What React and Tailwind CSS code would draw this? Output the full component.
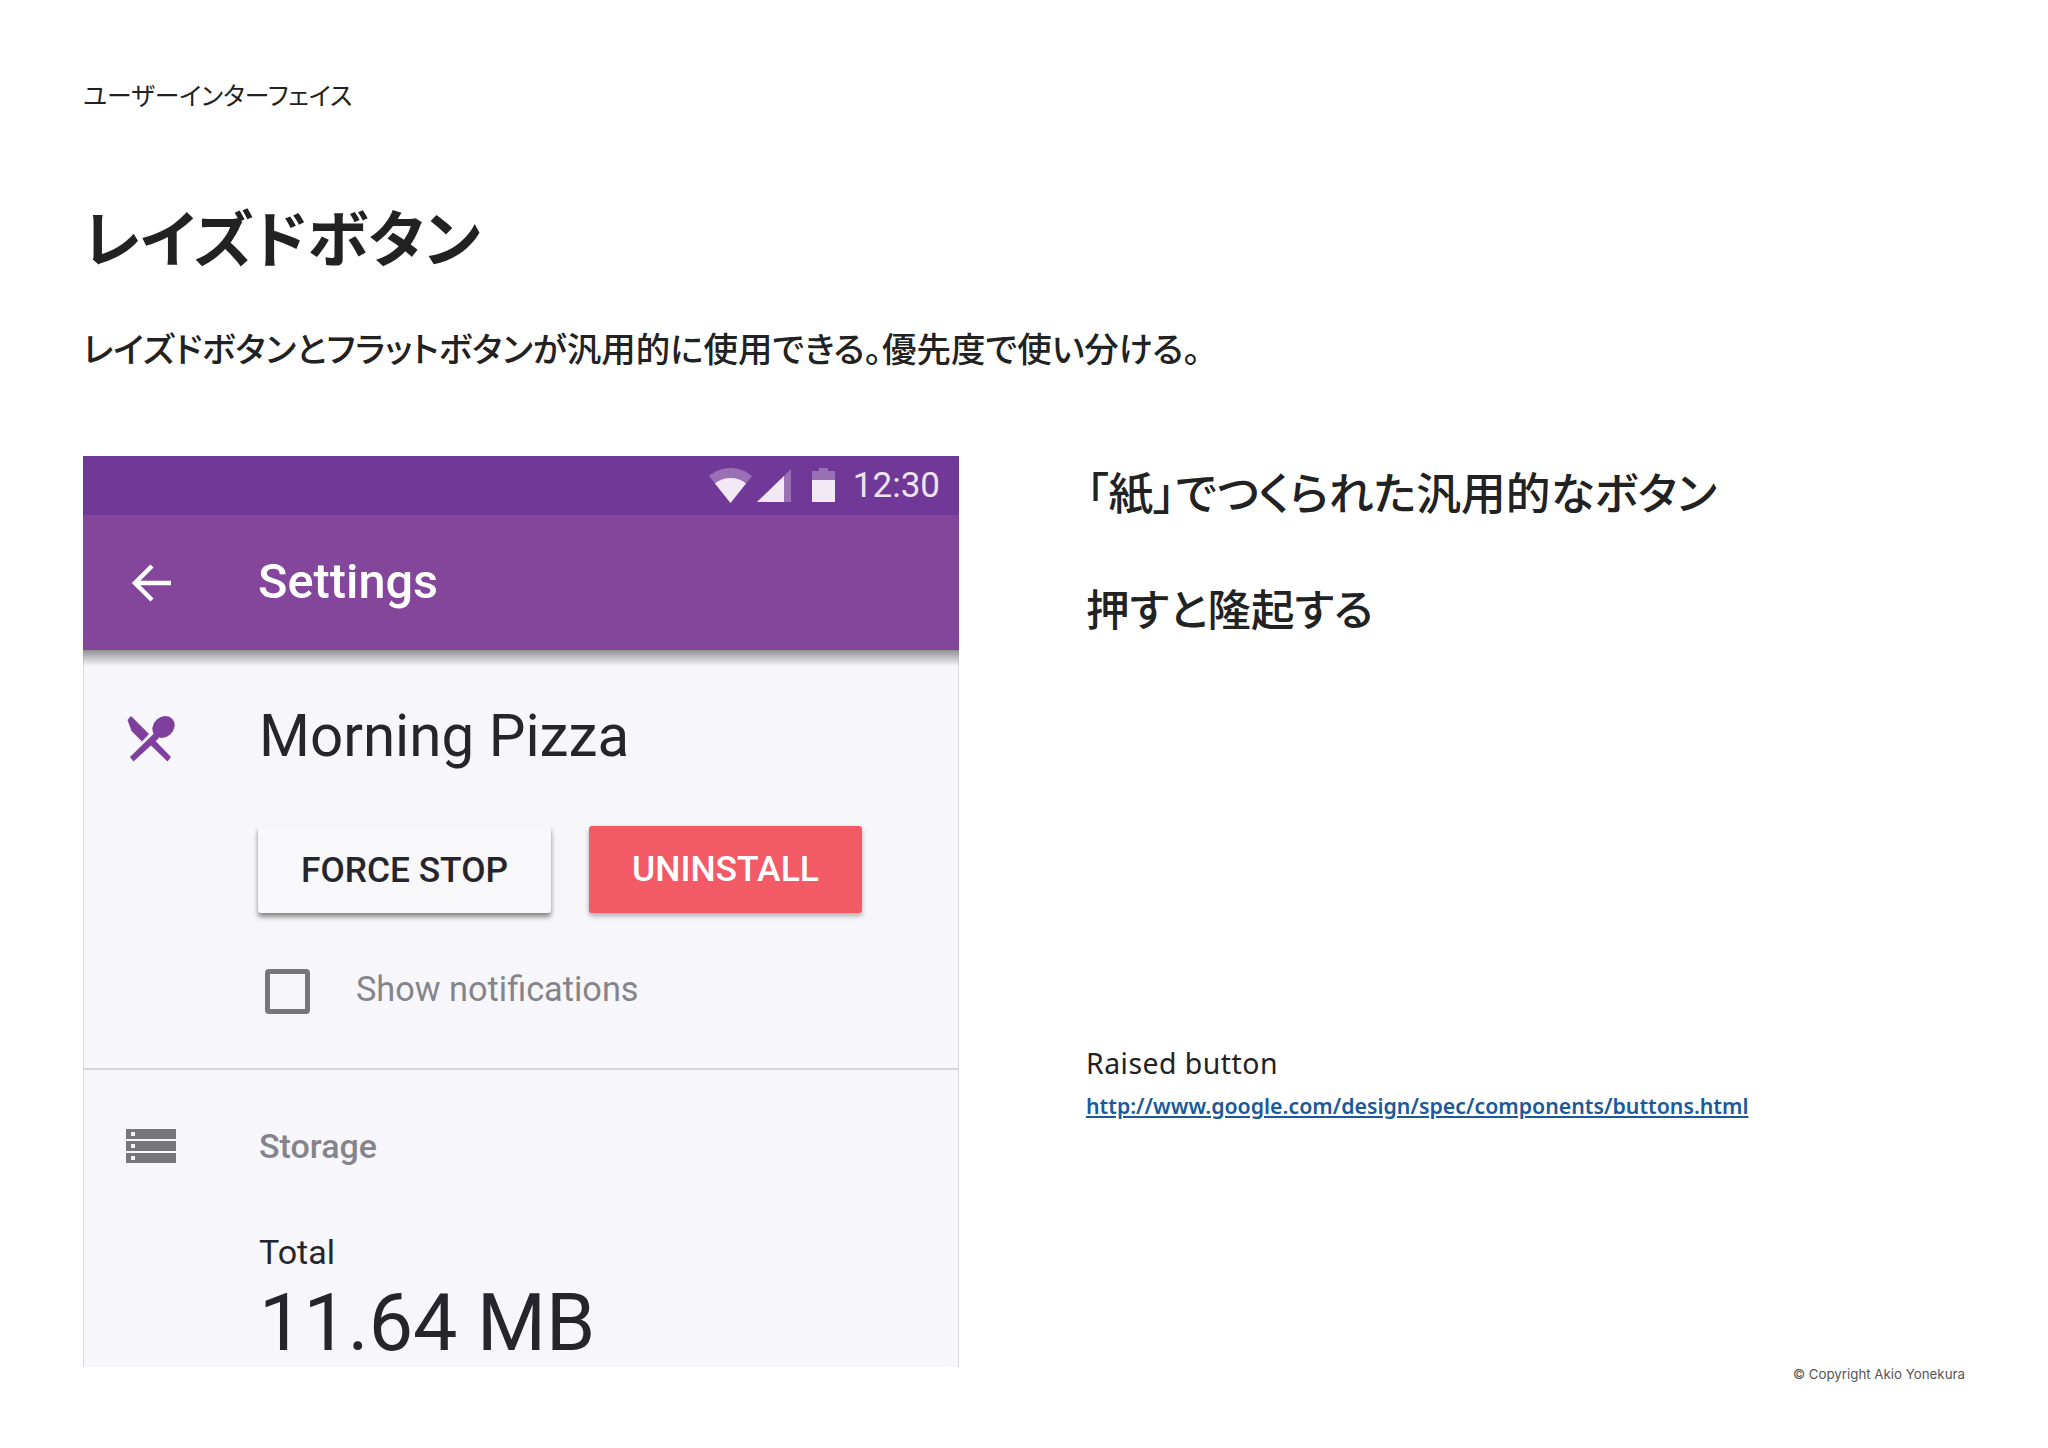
const jp = "font-['Noto_Sans_CJK_JP',sans-serif] [font-feature-settings:'palt']";
const roboto = "font-['Roboto',sans-serif]";

const WifiIcon = () => (
    <svg width="43" height="35" viewBox="0 0 43 35">
        <path d="M21.5 0C13 0 6 3 0 8L21.5 35L43 8C37 3 30 0 21.5 0Z" fill="#9a70b4" />
        <path d="M21.5 10C15 10 10 12 6 15.5L21.5 35L37 15.5C33 12 28 10 21.5 10Z" fill="#f3e9f4" />
    </svg>
);

const SignalIcon = () => (
    <svg width="34" height="33" viewBox="0 0 34 33">
        <path d="M34 0V33H0Z" fill="#9a70b4" />
        <path d="M27 7V33H0Z" fill="#f3e9f4" />
    </svg>
);

const BatteryIcon = () => (
    <svg width="23" height="34" viewBox="0 0 23 34">
        <path d="M7 0H16V3H23V12H0V3H7Z" fill="#9a70b4" />
        <rect y="12" width="23" height="22" fill="#f3e9f4" />
    </svg>
);

const BackIcon = () => (
    <svg width="40" height="38" viewBox="0 0 40 38" fill="none" stroke="#fff" strokeWidth="4.5">
        <path d="M40 19H4" />
        <path d="M21 2L4 19L21 36" />
    </svg>
);

const CutleryIcon = () => (
    <svg className="mt-[5px]" width="48" height="46" viewBox="0 0 47 46" fill="#7f3f9d">
        <path d="M0 4L3.5 0L21.5 18L14.5 25.5L4 15Z" />
        <path d="M27 24L43.5 41L40 45.5L22.5 28.5Z" />
        <ellipse cx="36" cy="11" rx="12" ry="10" transform="rotate(-42 36 11)" />
        <path d="M27 17L2.5 41L6 45.5L31.5 22Z" />
    </svg>
);

const StorageIcon = () => (
    <svg width="50" height="34" viewBox="0 0 50 34">
        {[0, 12, 24].map((y) => (
            <g key={y}>
                <rect y={y} width="50" height="10" fill="#77767b" />
                <rect x="5" y={y + 3} width="4" height="4" fill="#f7f7fb" />
            </g>
        ))}
    </svg>
);

const Phone = () => (
    <div className={`w-[876px] h-[911px] shrink-0 flex flex-col bg-[#f7f7fb] ${roboto}`}>
        <div className="h-[59px] shrink-0 bg-[#703897] flex items-center pr-[19px] pb-[1px]">
            <div className="ml-auto flex items-center">
                <WifiIcon />
                <div className="ml-[5px]"><SignalIcon /></div>
                <div className="ml-[21px]"><BatteryIcon /></div>
                <span className="ml-[18px] text-[35px] leading-none text-[#f0e3f3]">12:30</span>
            </div>
        </div>
        <div className="h-[135px] shrink-0 bg-[#84469a] flex items-center pl-[48px]">
            <BackIcon />
            <span className="ml-[87px] text-[48.7px] leading-none font-medium text-white">Settings</span>
        </div>
        <div className="relative flex-1 min-h-0 border-x border-[#d9d9e2] flex flex-col">
            {/* app bar shadow */}
            <div className="absolute -inset-x-px top-0 h-[16px] bg-gradient-to-b from-[#909095] to-transparent" />
            <div className="h-[420px] shrink-0 border-b-2 border-[#d6d6de] pl-[43px] pt-[60px]">
                <div className="flex items-center h-[52px]">
                    <CutleryIcon />
                    <span className="ml-[84px] text-[58.3px] leading-none text-[#26252b]">Morning Pizza</span>
                </div>
                <div className="flex gap-[38px] ml-[131px] mt-[64px]">
                    <button className="w-[293px] h-[87px] pt-[1px] rounded-[3px] bg-[#f8f8fa] shadow-[0_4px_5px_rgba(0,0,0,0.45)] text-[35.3px] font-medium text-[#26252b]">FORCE STOP</button>
                    <button className="w-[273px] h-[87px] pt-[1px] rounded-[3px] bg-[#f25a65] shadow-[0_3px_5px_rgba(0,0,0,0.3)] text-[35.5px] font-medium text-white">UNINSTALL</button>
                </div>
                <div className="flex items-center ml-[138px] mt-[56px]">
                    <div className="w-[45px] h-[45px] rounded-[4px] border-[5px] border-[#77767b]" />
                    <span className="ml-[46px] -mt-[5px] text-[34.3px] leading-none text-[#85848a]">Show notifications</span>
                </div>
            </div>
            <div className="pl-[42px] pt-[59px]">
                <div className="flex items-center h-[34px]">
                    <StorageIcon />
                    <span className="ml-[83px] text-[34px] leading-none font-medium text-[#85848a]">Storage</span>
                </div>
                <div className="ml-[133px] mt-[72px] text-[34px] leading-[34px] text-[#26252b]">Total</div>
                <div className="ml-[133px] mt-[25px] text-[79px] leading-[58px] text-[#26252b]">11.64 MB</div>
            </div>
        </div>
    </div>
);

export default function App() {
    return (
        <div className="w-[2048px] h-[1448px] bg-white pl-[83px] pr-[83px] pt-[79px] text-[#222]">
            <p className={`text-[24.8px] leading-[30px] ${jp}`}>ユーザーインターフェイス</p>
            <h1 className={`mt-[91px] text-[61.6px] leading-[72px] font-bold ${jp}`}>レイズドボタン</h1>
            <p className={`mt-[53px] text-[34.5px] leading-[44px] font-medium ${jp}`}>レイズドボタンとフラットボタンが汎用的に使用できる。優先度で使い分ける。</p>
            <div className="mt-[87px] flex h-[911px]">
                <Phone />
                <div className="flex-1 pl-[127px] flex flex-col">
                    <p className={`mt-[10px] text-[44.8px] leading-[50px] font-medium ${jp}`}>「紙」でつくられた汎用的なボタン</p>
                    <p className={`mt-[66px] text-[43.6px] leading-[50px] font-medium ${jp}`}>押すと隆起する</p>
                    <p className="mt-[413px] text-[28.4px] leading-[36px] font-['Noto_Sans',sans-serif] tracking-[0.5px]">Raised button</p>
                    <a className="mt-[10px] text-[21.3px] leading-[30px] font-semibold font-['Noto_Sans',sans-serif] text-[#1a5a9a] underline">http://www.google.com/design/spec/components/buttons.html</a>
                    <p className="mt-auto -mb-[17px] text-right text-[13.3px] leading-[20px] text-[#555] font-['Inter',sans-serif]">© Copyright Akio Yonekura</p>
                </div>
            </div>
        </div>
    );
}
